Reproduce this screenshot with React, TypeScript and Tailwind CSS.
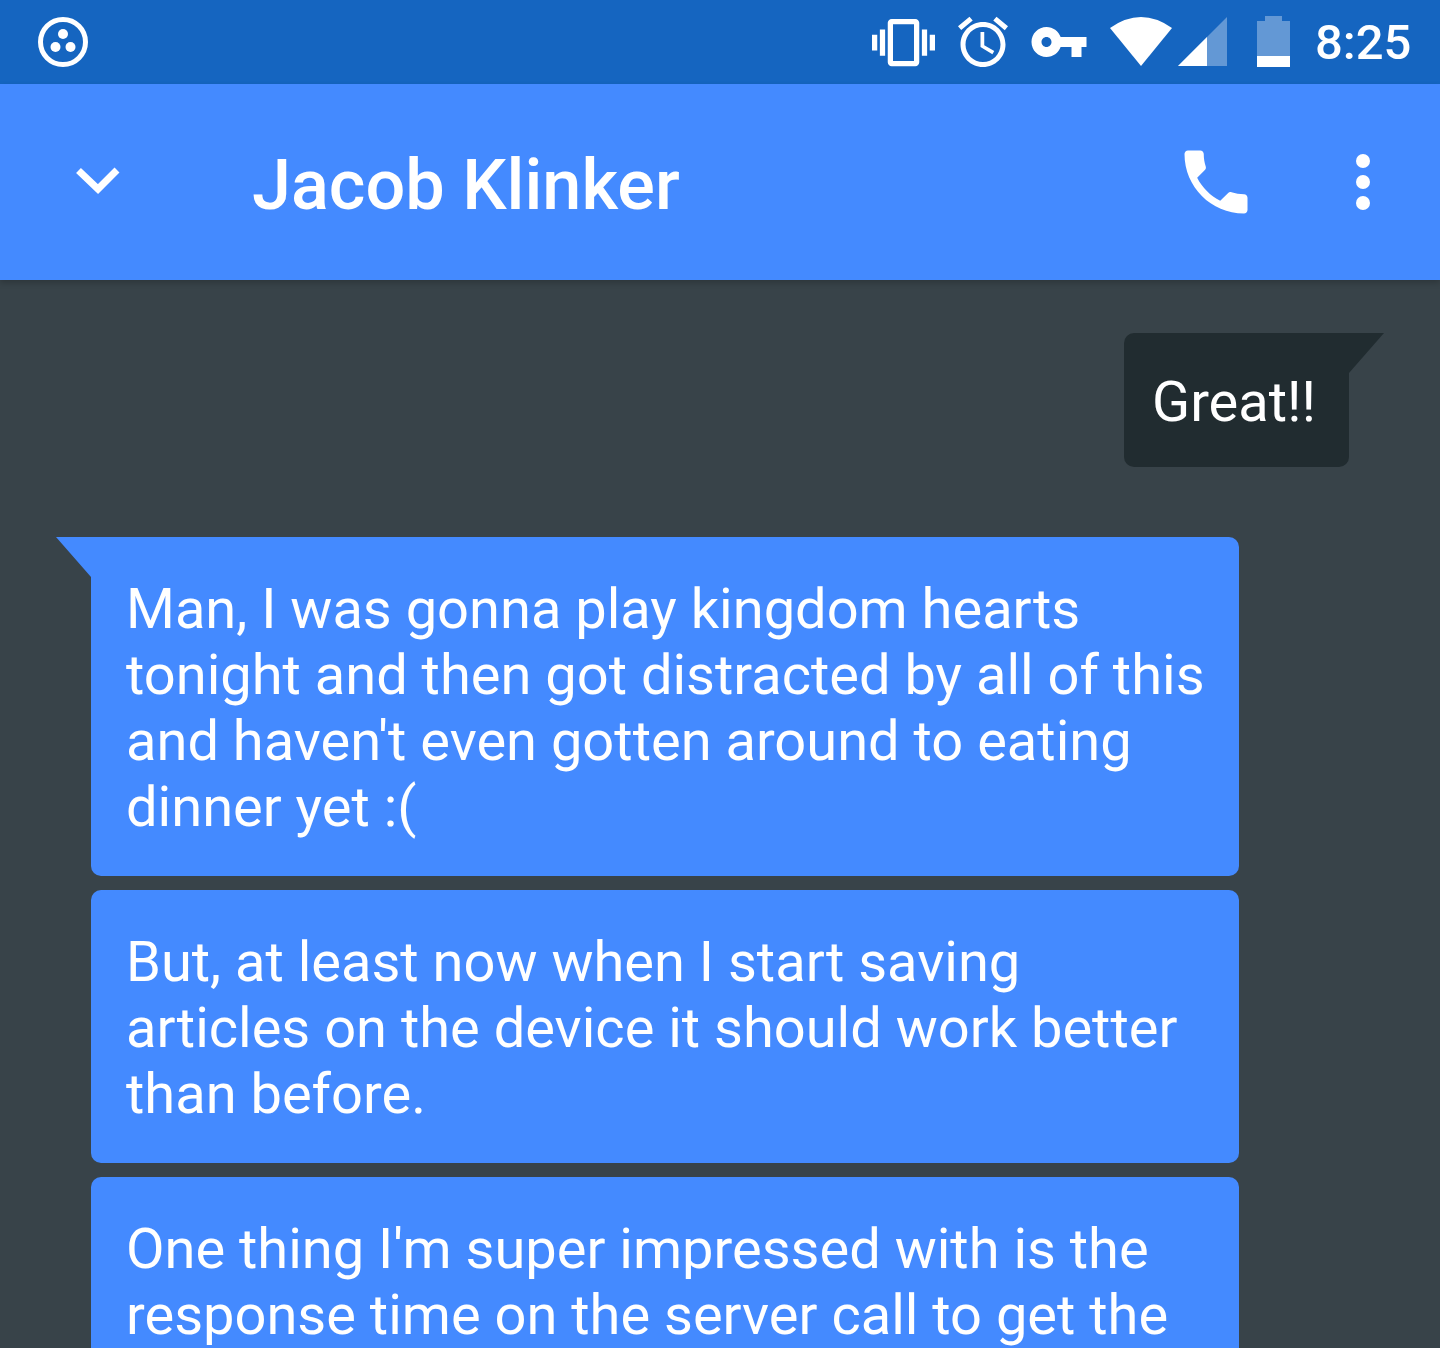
export default function App() {
  return (
    <div className="h-[1348px] w-[1440px] overflow-hidden bg-[#384349] font-['Roboto',sans-serif] text-white">
      <header className="flex h-[84px] items-center bg-[#1565c0]">
        <svg className="ml-[38px] h-[50px] w-[50px]" viewBox="0 0 50 50" fill="white">
          <circle cx="25" cy="25" r="22.5" fill="none" stroke="white" strokeWidth="5" />
          <circle cx="25" cy="17" r="5" />
          <circle cx="17.5" cy="30" r="5" />
          <circle cx="32.5" cy="30" r="5" />
        </svg>
        <svg className="ml-[784px] h-[63px] w-[63px]" viewBox="0 0 24 24" fill="white">
          <path d="M0 15h2V9H0v6zm3 2h2V7H3v10zm19-8v6h2V9h-2zm-3 8h2V7h-2v10zM16.5 3h-9C6.67 3 6 3.67 6 4.5v15c0 .83.67 1.5 1.5 1.5h9c.83 0 1.5-.67 1.5-1.5v-15c0-.83-.67-1.5-1.5-1.5zM16 19H8V5h8v14z" />
        </svg>
        <svg className="ml-[18px] h-[60px] w-[60px]" viewBox="0 0 24 24" fill="white">
          <path d="M22 5.72l-4.6-3.86-1.29 1.53 4.6 3.86L22 5.72zM7.88 3.39L6.6 1.86 2 5.71l1.29 1.53 4.59-3.85zM12.5 8H11v6l4.75 2.85.75-1.23-4-2.37V8zM12 4c-4.97 0-9 4.03-9 9s4.03 9 9 9c4.97 0 9-4.03 9-9s-4.03-9-9-9zm0 16c-3.87 0-7-3.13-7-7s3.13-7 7-7c3.87 0 7 3.13 7 7s-3.13 7-7 7z" />
        </svg>
        <svg className="ml-[15.5px] h-[60px] w-[60px]" viewBox="0 0 24 24" fill="white">
          <path d="M12.65 10C11.83 7.67 9.61 6 7 6c-3.31 0-6 2.69-6 6s2.69 6 6 6c2.61 0 4.83-1.67 5.65-4H17v4h4v-4h2v-4H12.65zM7 14c-1.1 0-2-.9-2-2s.9-2 2-2 2 .9 2 2-.9 2-2 2z" />
        </svg>
        <svg className="ml-[21.5px] h-[84px] w-[118px] shrink-0" viewBox="0 0 118 84" fill="white">
          <path d="M0 28Q31 6 62 28L31 66Z" />
          <path d="M68 66L117 17V66Z" fill="#6398d5" />
          <path d="M68 66L97 37V66Z" />
        </svg>
        <svg className="ml-[29px] h-[84px] w-[34px] shrink-0" viewBox="0 0 34 84" fill="#6398d5">
          <path d="M8 16H25V21H33V56H0V21H8Z" />
          <rect x="0" y="56" width="33" height="11" fill="white" />
        </svg>
        <span className="ml-[24px] text-[49px] leading-none font-medium">8:25</span>
      </header>
      <div className="relative flex h-[196px] items-center bg-[#448aff] shadow-[0_3px_6px_rgba(0,0,0,0.2)]">
        <svg className="ml-[74px] h-[40px] w-[48px] shrink-0 translate-y-[2px]" viewBox="0 0 48 40" fill="none" stroke="white" strokeWidth="7">
          <path d="M4.5 6.5L24 25L43 6" />
        </svg>
        <h1 className="ml-[130px] w-[921.5px] shrink-0 translate-y-[3px] text-[70.2px] leading-none font-medium">Jacob Klinker</h1>
        <svg className="h-[84px] w-[84px] shrink-0" viewBox="0 0 24 24" fill="white">
          <path d="M6.62 10.79c1.44 2.83 3.76 5.14 6.59 6.59l2.2-2.2c.27-.27.67-.36 1.02-.24 1.12.37 2.33.57 3.57.57.55 0 1 .45 1 1V20c0 .55-.45 1-1 1-9.39 0-17-7.61-17-17 0-.55.45-1 1-1h3.5c.55 0 1 .45 1 1 0 1.25.2 2.45.57 3.57.11.35.03.74-.25 1.02l-2.2 2.2z" />
        </svg>
        <svg className="ml-[98px] h-[56px] w-[14px] shrink-0" viewBox="0 0 14 56" fill="white">
          <circle cx="7" cy="7" r="7" />
          <circle cx="7" cy="28" r="7" />
          <circle cx="7" cy="49" r="7" />
        </svg>
      </div>
      <main className="flex flex-col pt-[53px] text-[56px] leading-[66px]">
        <div className="relative mr-[91px] w-[225px] self-end rounded-[10px] rounded-tr-none bg-[#212c30] pt-[36px] pb-[32px] pl-[28px]">
          <span>Great!!</span>
          <svg className="absolute top-0 left-full h-[40px] w-[35px]" viewBox="0 0 35 40" fill="#212c30">
            <path d="M0 0H35L0 40Z" />
          </svg>
        </div>
        <div className="relative mt-[70px] ml-[91px] h-[339px] w-[1148px] rounded-[10px] rounded-tl-none bg-[#448aff] pt-[39px] pl-[35px]">
          <svg className="absolute top-0 right-full h-[40px] w-[35px]" viewBox="0 0 35 40" fill="#448aff">
            <path d="M35 0H0L35 40Z" />
          </svg>
          Man, I was gonna play kingdom hearts
          <br />
          tonight and then got distracted by all of this
          <br />
          and haven't even gotten around to eating
          <br />
          dinner yet :(
        </div>
        <div className="mt-[14px] ml-[91px] h-[273px] w-[1148px] rounded-[10px] bg-[#448aff] pt-[39px] pl-[35px]">
          But, at least now when I start saving
          <br />
          articles on the device it should work better
          <br />
          than before.
        </div>
        <div className="mt-[14px] ml-[91px] h-[273px] w-[1148px] rounded-[10px] bg-[#448aff] pt-[39px] pl-[35px]">
          One thing I'm super impressed with is the
          <br />
          response time on the server call to get the
        </div>
      </main>
    </div>
  );
}
